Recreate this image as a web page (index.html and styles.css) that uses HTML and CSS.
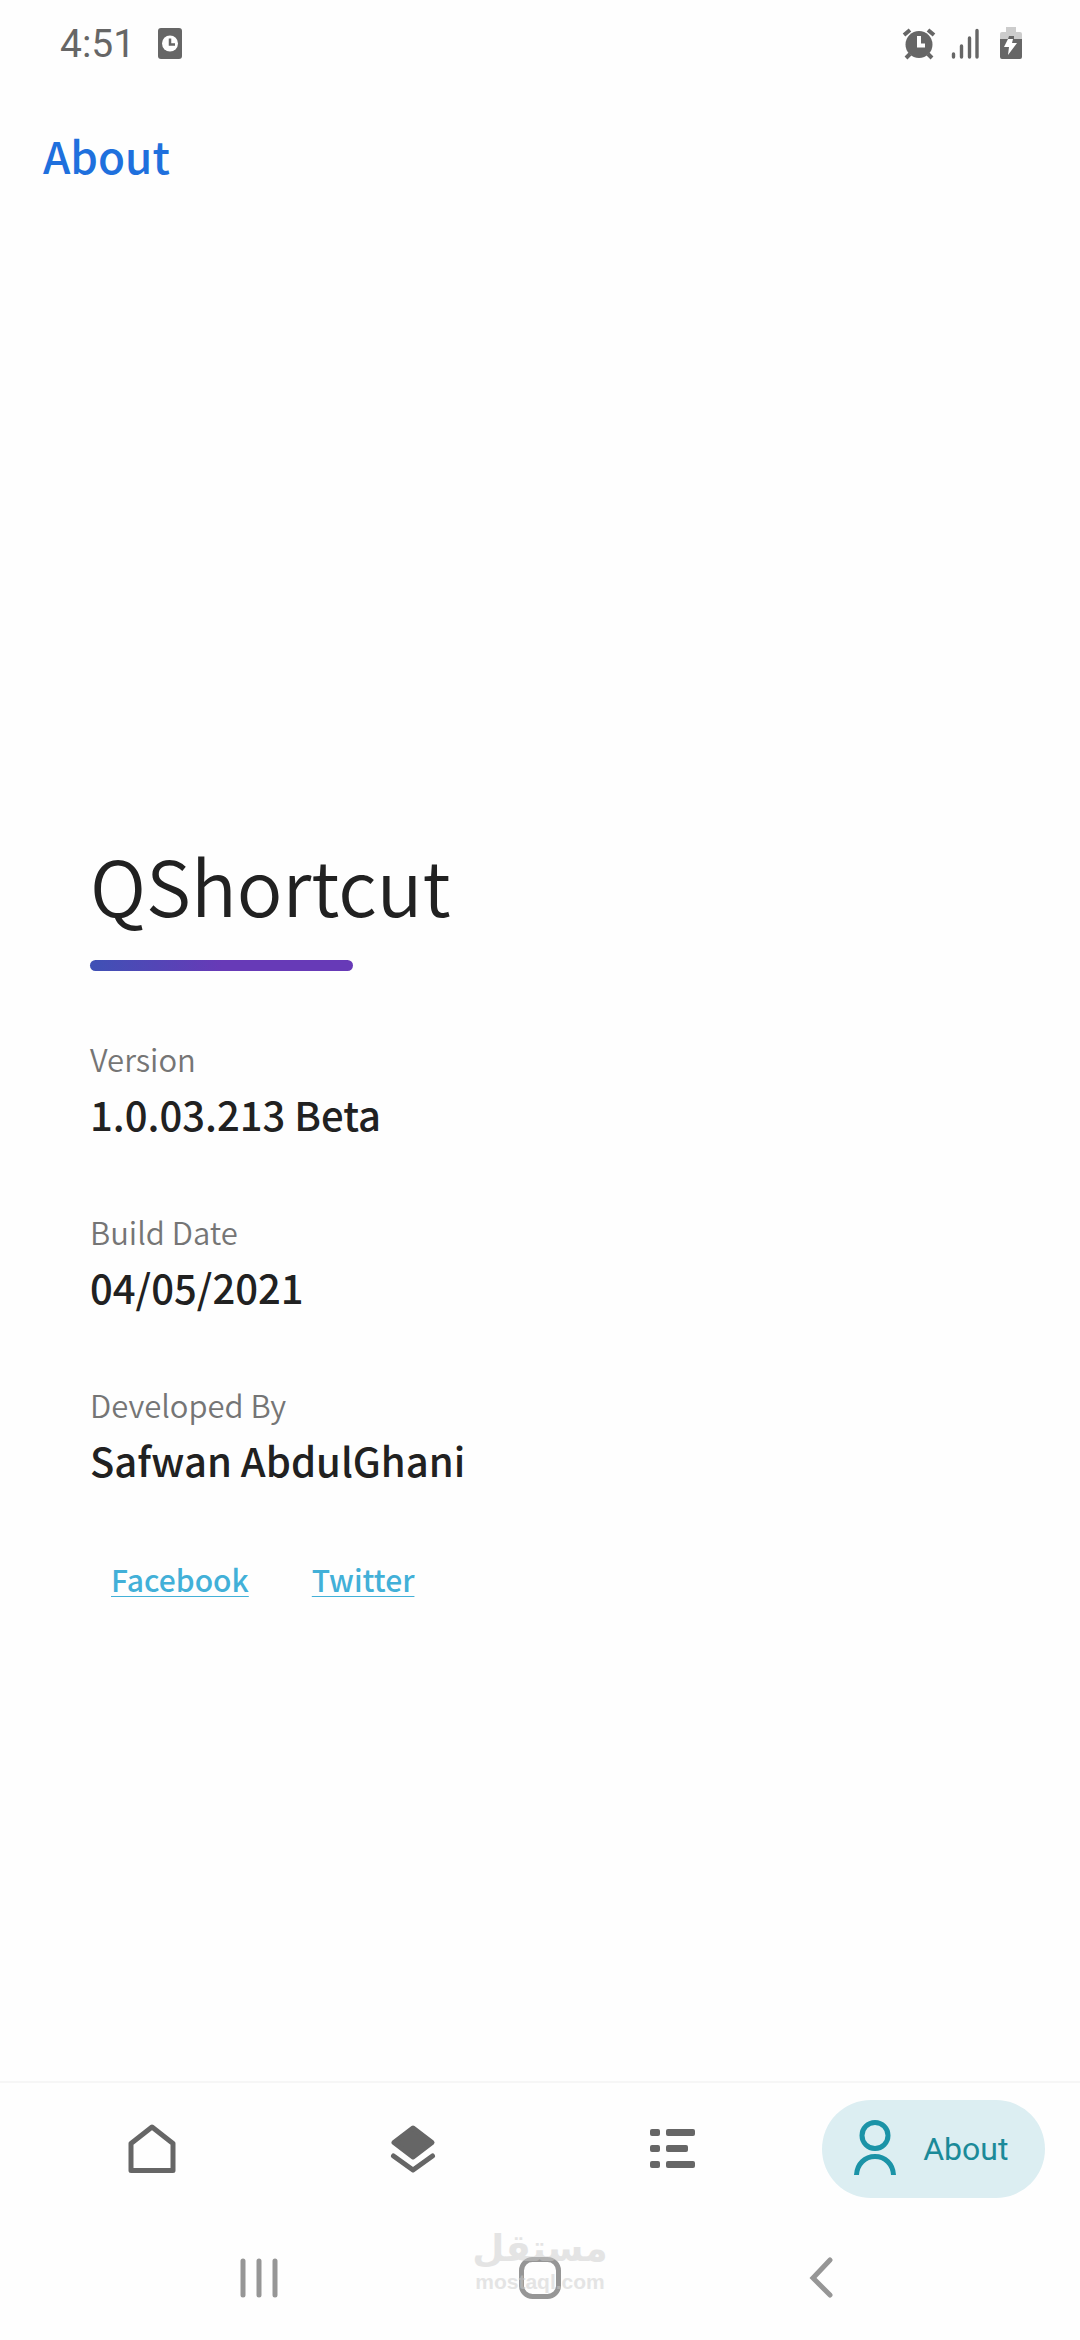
FILE: index.html
```html
<!DOCTYPE html>
<html lang="en">
<head>
<meta charset="utf-8">
<meta name="viewport" content="width=device-width, initial-scale=1">
<title>About - QShortcut</title>
<link rel="stylesheet" href="styles.css">
</head>
<body class="screen">
  <div class="status">
    <span class="clock">4:51</span>
    <svg class="note-icon" width="26" height="32" viewBox="0 0 26 32"><rect x="1" y="0" width="24" height="31" rx="3" fill="#666"/><circle cx="13" cy="15.500" r="8" fill="#fff"/><path d="M13 10.500v6h5" fill="none" stroke="#666" stroke-width="2.500"/></svg>
    <div class="status-icons">
      <svg width="34" height="32" viewBox="0 0 34 32"><g stroke="#666" stroke-width="4" fill="none"><path d="M2 7l6-5M26 2l6 5M8 26l-4 4M26 26l4 4"/></g><circle cx="17" cy="16.500" r="13.500" fill="#666"/><path d="M17 8v9.500h6" fill="none" stroke="#fff" stroke-width="4"/></svg>
      <svg width="28" height="32" viewBox="0 0 28 32"><path d="M2.500 26v3M10.500 18v11M18.500 10v19M26 2.500V29" stroke="#666" stroke-width="3.400" stroke-linecap="round"/></svg>
      <svg class="battery" width="22" height="34" viewBox="0 0 22 34"><path d="M6 0h10v5h4a2 2 0 0 1 2 2v5H0V7a2 2 0 0 1 2-2h4z" fill="#ccc"/><path d="M0 12h8l1-3h5v3h8v18a2 2 0 0 1-2 2H2a2 2 0 0 1-2-2z" fill="#666"/><path d="M8 12h5l-1 4h5L8 28l1-8H4z" fill="#fff"/></svg>
    </div>
  </div>
  <header class="header"><h1 class="header-title">About</h1></header>

  <main class="content">
    <div>
      <h2 class="app-name">QShortcut</h2>
      <div class="accent"></div>
    </div>
    <dl class="facts">
      <div><dt class="label">Version</dt><dd class="value">1.0.03.213 Beta</dd></div>
      <div><dt class="label">Build Date</dt><dd class="value">04/05/2021</dd></div>
      <div><dt class="label">Developed By</dt><dd class="value">Safwan AbdulGhani</dd></div>
    </dl>
    <div class="links">
      <a class="link" href="#facebook">Facebook</a>
      <a class="link" href="#twitter">Twitter</a>
    </div>
  </main>

  <nav class="tabs">
    <button class="tab" type="button" aria-label="Home"><svg width="48" height="50" viewBox="0 0 48 50"><path d="M3 19.500L24 3l21 16.500v27H3z" fill="none" stroke="#666" stroke-width="5" stroke-linejoin="round"/></svg></button>
    <button class="tab" type="button" aria-label="Layers"><svg width="46" height="50" viewBox="0 0 46 50"><path d="M23 4L42 18.500 23 33 4 18.500z" fill="#666" stroke="#666" stroke-width="5" stroke-linejoin="round"/><path d="M3.500 32L23 46l19.500-14" fill="none" stroke="#666" stroke-width="5" stroke-linecap="round" stroke-linejoin="round"/></svg></button>
    <button class="tab" type="button" aria-label="List"><svg width="46" height="40" viewBox="0 0 46 40"><g fill="#666"><rect x="0" y="0" width="10" height="7" rx="2"/><rect x="16" y="0" width="29" height="7" rx="2"/><rect x="0" y="16" width="10" height="7" rx="2"/><rect x="16" y="16" width="22" height="7" rx="2"/><rect x="0" y="32" width="10" height="7" rx="2"/><rect x="16" y="32" width="29" height="7" rx="2"/></g></svg></button>
    <button class="tab tab-active" type="button"><svg width="44" height="60" viewBox="0 0 44 60"><g fill="none" stroke="#1b93a7" stroke-width="5"><circle cx="22" cy="16.500" r="13"/><path d="M3.500 56C4 45 12 37.500 22 37.500S40 45 40.500 56"/></g></svg><span>About</span></button>
  </nav>

  <div class="system">
    <button class="key" type="button" aria-label="Recent apps"><svg width="38" height="42" viewBox="0 0 38 42"><path d="M3 4v34M19 4v34M35 4v34" stroke="#969696" stroke-width="5" stroke-linecap="round"/></svg></button>
    <button class="key" type="button" aria-label="Home screen"><svg width="42" height="42" viewBox="0 0 42 42"><rect x="2.500" y="2.500" width="37" height="37" rx="11" fill="none" stroke="#969696" stroke-width="5"/></svg></button>
    <button class="key" type="button" aria-label="Back"><svg width="24" height="42" viewBox="0 0 24 42"><path d="M21 3L4 21l17 17" fill="none" stroke="#969696" stroke-width="5" stroke-linecap="round"/></svg></button>
    <div class="watermark"><span class="mark-ar" lang="ar" dir="rtl">مستقل</span><span class="mark-en">mostaql.com</span></div>
  </div>
</body>
</html>
```
FILE: styles.css
```css
* { box-sizing: border-box; }

.screen {
  margin: 0;
  min-height: 100vh;
  display: flex;
  flex-direction: column;
  background: #fefefe;
  color: #212121;
  font-family: "Noto Sans CJK JP", "Noto Sans", sans-serif;
}

svg { display: block; flex: none; }
button { border: 0; padding: 0; background: none; font: inherit; }

.status {
  display: flex;
  align-items: center;
  height: 88px;
  padding: 0 58px 0 60px;
  color: #666;
}
.clock { font: 400 39px/48px Roboto, sans-serif; }
.note-icon { margin-left: 22px; }
.status-icons { display: flex; align-items: center; gap: 15px; margin-left: auto; }
.battery { margin-left: 6px; }

.header { padding: 35px 43px 41px; }
.header-title { margin: 0; font-size: 44px; line-height: 64px; font-weight: 500; color: #1f70dd; }

.content {
  flex: 1;
  display: flex;
  flex-direction: column;
  justify-content: center;
  gap: 64px;
  padding: 128px 90px 0;
}
.app-name { margin: 0 0 26px; font-size: 76px; line-height: 100px; font-weight: 350; }
.accent {
  width: 263px;
  height: 11px;
  border-radius: 6px;
  background: linear-gradient(90deg, #3f51b5, #673ab7 50%);
}
.facts { display: flex; flex-direction: column; gap: 63px; margin: 0; }
.label { font-size: 31px; line-height: 48px; font-weight: 350; color: #757575; }
.value { margin: 0; font-size: 40px; line-height: 62px; font-weight: 500; }
.links { display: flex; gap: 63px; padding-left: 21px; }
.link {
  font-size: 30px;
  line-height: 48px;
  font-weight: 500;
  color: #42b0d8;
  text-decoration-thickness: 1px;
  text-underline-offset: 4px;
}

.tabs {
  display: grid;
  grid-template-columns: repeat(4, 1fr);
  align-items: center;
  justify-items: center;
  height: 134px;
  padding: 0 16px 0 22px;
  border-top: 2px solid #f6f6f6;
}
.tab { display: flex; align-items: center; justify-content: center; height: 98px; }
.tab-active {
  gap: 26px;
  padding: 0 37px 0 31px;
  border-radius: 49px;
  background: #dceef2;
  color: #1b8a99;
  font: 400 32px/40px Roboto, sans-serif;
}

.system {
  position: relative;
  display: grid;
  grid-template-columns: repeat(3, 1fr);
  align-items: center;
  justify-items: center;
  height: 125px;
  padding: 0 118px;
}
.watermark {
  position: absolute;
  left: 50%;
  top: 12px;
  transform: translateX(-50%);
  display: flex;
  flex-direction: column;
  align-items: center;
  color: #ccc;
  opacity: 0.5;
  pointer-events: none;
}
.mark-ar { font: 700 37px/44px "DejaVu Sans", sans-serif; }
.mark-en { font: 700 21px/22px "Liberation Sans", sans-serif; }
```
